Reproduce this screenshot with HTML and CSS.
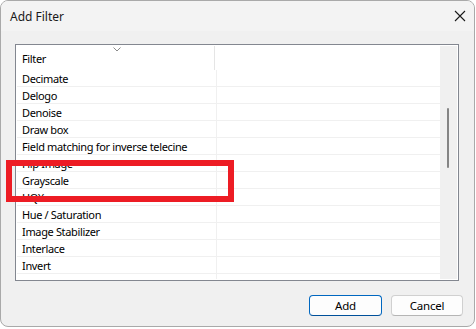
FILE: index.html
```html
<!DOCTYPE html>
<html lang="en">
<head>
    <meta charset="UTF-8">
    <meta name="viewport" content="width=device-width, initial-scale=1.0">
    <title>Add Filter</title>
    <link rel="stylesheet" href="styles.css">
</head>
<body>
    <div class="dialog">
        <div class="titlebar">
            <span class="title">Add Filter</span>
            <svg class="close-icon" width="12" height="12" viewBox="0 0 12 12">
                <path d="M1 1 L11 11 M11 1 L1 11" stroke="#1a1a1a" stroke-width="1.1" fill="none"/>
            </svg>
        </div>

        <div class="content">
            <div class="listbox">
                <div class="list-area">
                    <div class="list-header">
                        <div class="col-name header-cell">
                            <svg class="sort-arrow" width="8" height="5" viewBox="0 0 8 5">
                                <path d="M0.5 0.5 L4 4 L7.5 0.5" stroke="#8a8a8a" stroke-width="1" fill="none"/>
                            </svg>
                            Filter
                        </div>
                        <div class="col-rest header-cell"></div>
                    </div>
                    <div class="list-rows" id="filterRows">
                        <!-- Rows inserted by script -->
                    </div>
                </div>
                <div class="scrollbar">
                    <div class="scroll-thumb"></div>
                </div>
            </div>

            <div class="form-actions">
                <button class="btn btn-default">Add</button>
                <button class="btn">Cancel</button>
            </div>
        </div>
    </div>

    <!-- highlight box drawn over the list -->
    <div class="highlight"></div>

    <script>
        const filters = [
            'Decimate',
            'Delogo',
            'Denoise',
            'Draw box',
            'Field matching for inverse telecine',
            'Flip Image',
            'Grayscale',
            'HQX',
            'Hue / Saturation',
            'Image Stabilizer',
            'Interlace',
            'Invert',
            'Lumakey'
        ];

        const rows = document.getElementById('filterRows');
        filters.forEach(name => {
            const row = document.createElement('div');
            row.className = 'list-row';
            row.innerHTML = `
                <div class="col-name">${name}</div>
                <div class="col-rest"></div>
            `;
            rows.appendChild(row);
        });
    </script>
</body>
</html>
```

FILE: styles.css
```css
/* General Styles */
body {
    font-family: "Noto Sans", "Open Sans", sans-serif;
    font-size: 11px;
    letter-spacing: -0.35px;
    color: #000000;
    background-color: #ffffff;
    margin: 0;
    padding: 0;
}

/* Dialog window */
.dialog {
    box-sizing: border-box;
    width: 475px;
    height: 327px;
    border: 1px solid #a9a9a9;
    border-radius: 8px;
    overflow: hidden;
    background-color: #f0f0f0;
    display: flex;
    flex-direction: column;
}

/* Title bar */
.titlebar {
    height: 30px;
    flex-shrink: 0;
    background-color: #f3f3f3;
    display: flex;
    align-items: center;
    justify-content: space-between;
    padding: 0 8px 0 9px;
}

.title {
    color: #1a1a1a;
    font-size: 12px;
    letter-spacing: 0;
}

/* Content area */
.content {
    flex: 1;
    display: flex;
    flex-direction: column;
    padding: 13px 15px 0 14px;
}

/* List box */
.listbox {
    box-sizing: border-box;
    height: 237px;
    border: 1px solid #838790;
    padding: 1px;
    background-color: #ffffff;
    display: flex;
    overflow: hidden;
}

.list-area {
    flex: 1;
    overflow: hidden;
}

.list-header {
    height: 24px;
    display: flex;
}

.header-cell {
    position: relative;
    display: flex;
    align-items: center;
}

.list-header .col-name {
    border-right: 1px solid #e5e5e5;
    width: 198px;
}

.sort-arrow {
    position: absolute;
    top: 1px;
    left: 96px;
}

.list-row {
    height: 16px;
    border-bottom: 1px solid #f0f0f0;
    display: flex;
}

.col-name {
    box-sizing: border-box;
    width: 200px;
    padding-left: 5px;
    padding-top: 1px;
    line-height: 16px;
    white-space: nowrap;
}

.list-row .col-name {
    border-right: 1px solid #f0f0f0;
}

.col-rest {
    flex: 1;
}

/* Scrollbar */
.scrollbar {
    width: 17px;
    flex-shrink: 0;
    background-color: #f0f0f0;
    position: relative;
}

.scroll-thumb {
    width: 2px;
    height: 60px;
    margin: 62px 0 0 7px;
    border-radius: 1px;
    background-color: #858585;
}

/* Button Styles */
.form-actions {
    display: flex;
    justify-content: flex-end;
    gap: 9px;
    margin-top: 14px;
    margin-right: -4px;
}

.btn {
    box-sizing: border-box;
    width: 72px;
    height: 21px;
    font-family: inherit;
    font-size: 11.5px;
    letter-spacing: -0.2px;
    color: #000000;
    background-color: #fdfdfd;
    border: 1px solid #d0d0d0;
    border-bottom-color: #b5b5b5;
    border-radius: 4px;
    padding: 0;
}

.btn-default {
    width: 73px;
    border-color: #0067c0;
    border-bottom-color: #00509a;
}

/* Red highlight annotation */
.highlight {
    position: absolute;
    box-sizing: border-box;
    left: 6px;
    top: 160px;
    width: 228px;
    height: 42px;
    border: 6px solid #ed1c24;
}
```
